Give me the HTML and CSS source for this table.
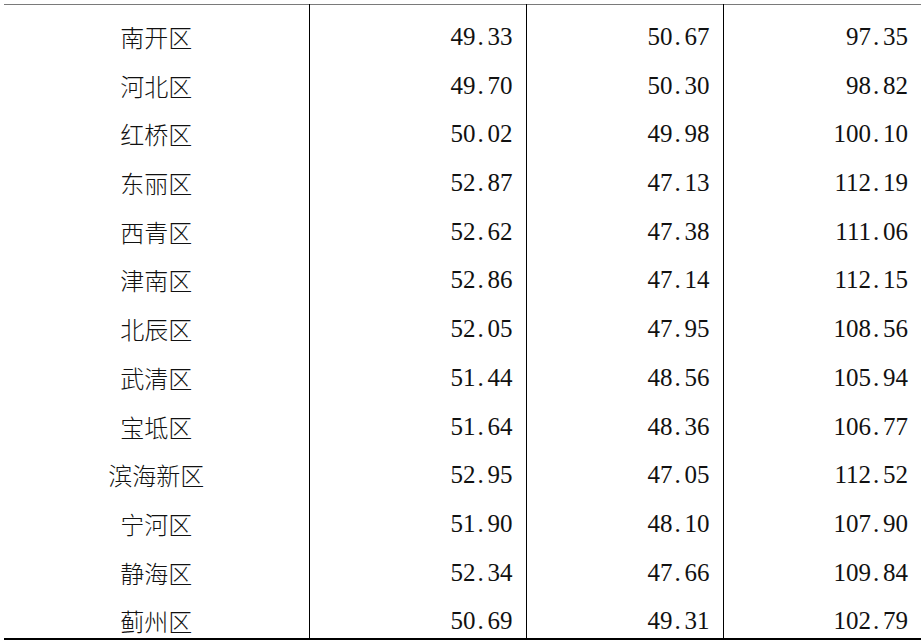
FILE: index.html
```html
<!DOCTYPE html>
<html lang="en">
<head>
<meta charset="utf-8">
<title>天津各区人口性别比</title>
<link rel="stylesheet" href="styles.css">
</head>
<body>
<table class="data">
  <colgroup>
    <col class="c-name">
    <col class="c-num">
    <col class="c-num2">
    <col class="c-num3">
  </colgroup>
  <tbody>
    <tr><td class="name" lang="zh-CN">南开区</td><td class="num">49<span class="pt">.</span>33</td><td class="num">50<span class="pt">.</span>67</td><td class="num">97<span class="pt">.</span>35</td></tr>
    <tr><td class="name" lang="zh-CN">河北区</td><td class="num">49<span class="pt">.</span>70</td><td class="num">50<span class="pt">.</span>30</td><td class="num">98<span class="pt">.</span>82</td></tr>
    <tr><td class="name" lang="zh-CN">红桥区</td><td class="num">50<span class="pt">.</span>02</td><td class="num">49<span class="pt">.</span>98</td><td class="num">100<span class="pt">.</span>10</td></tr>
    <tr><td class="name" lang="zh-CN">东丽区</td><td class="num">52<span class="pt">.</span>87</td><td class="num">47<span class="pt">.</span>13</td><td class="num">112<span class="pt">.</span>19</td></tr>
    <tr><td class="name" lang="zh-CN">西青区</td><td class="num">52<span class="pt">.</span>62</td><td class="num">47<span class="pt">.</span>38</td><td class="num">111<span class="pt">.</span>06</td></tr>
    <tr><td class="name" lang="zh-CN">津南区</td><td class="num">52<span class="pt">.</span>86</td><td class="num">47<span class="pt">.</span>14</td><td class="num">112<span class="pt">.</span>15</td></tr>
    <tr><td class="name" lang="zh-CN">北辰区</td><td class="num">52<span class="pt">.</span>05</td><td class="num">47<span class="pt">.</span>95</td><td class="num">108<span class="pt">.</span>56</td></tr>
    <tr><td class="name" lang="zh-CN">武清区</td><td class="num">51<span class="pt">.</span>44</td><td class="num">48<span class="pt">.</span>56</td><td class="num">105<span class="pt">.</span>94</td></tr>
    <tr><td class="name" lang="zh-CN">宝坻区</td><td class="num">51<span class="pt">.</span>64</td><td class="num">48<span class="pt">.</span>36</td><td class="num">106<span class="pt">.</span>77</td></tr>
    <tr><td class="name" lang="zh-CN">滨海新区</td><td class="num">52<span class="pt">.</span>95</td><td class="num">47<span class="pt">.</span>05</td><td class="num">112<span class="pt">.</span>52</td></tr>
    <tr><td class="name" lang="zh-CN">宁河区</td><td class="num">51<span class="pt">.</span>90</td><td class="num">48<span class="pt">.</span>10</td><td class="num">107<span class="pt">.</span>90</td></tr>
    <tr><td class="name" lang="zh-CN">静海区</td><td class="num">52<span class="pt">.</span>34</td><td class="num">47<span class="pt">.</span>66</td><td class="num">109<span class="pt">.</span>84</td></tr>
    <tr><td class="name" lang="zh-CN">蓟州区</td><td class="num">50<span class="pt">.</span>69</td><td class="num">49<span class="pt">.</span>31</td><td class="num">102<span class="pt">.</span>79</td></tr>
  </tbody>
</table>
</body>
</html>
```
FILE: styles.css
```css
html, body {
  margin: 0;
  padding: 0;
  background: #ffffff;
}

.data {
  margin: 4px 0 0 4px;
  width: 917px;
  border-collapse: collapse;
  table-layout: fixed;
  border-top: 1.5px solid #7a7a7a;
  border-bottom: 2px solid #000000;
  color: #111111;
}

.c-name { width: 305px; }
.c-num  { width: 217px; }
.c-num2 { width: 197px; }
.c-num3 { width: 198px; }

.data td {
  padding: 17px 13px 1.7px 0;
  line-height: 30px;
  font-size: 24px;
  white-space: nowrap;
}

.data td.num {
  font-family: "Liberation Serif", Tinos, serif;
  font-size: 25px;
  text-align: right;
  border-left: 1px solid #000000;
}

.data td.name {
  padding-right: 0;
  text-align: center;
  font-family: "Noto Sans CJK SC", sans-serif;
  font-weight: 300;
}

.pt {
  display: inline-block;
  width: 12px;
  padding-left: 2px;
  box-sizing: border-box;
  text-align: left;
}
```
